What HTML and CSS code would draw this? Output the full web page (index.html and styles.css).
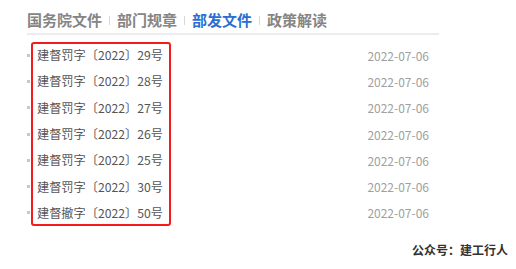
FILE: index.html
```html
<!DOCTYPE html>
<html lang="zh-CN">
<head>
    <meta charset="UTF-8">
    <meta name="viewport" content="width=device-width, initial-scale=1.0">
    <title>部发文件</title>
    <link rel="stylesheet" href="styles.css">
</head>
<body>

<div class="panel">
    <div class="tabs">
        <span class="tab">国务院文件</span>
        <span class="sep"></span>
        <span class="tab">部门规章</span>
        <span class="sep"></span>
        <span class="tab active">部发文件</span>
        <span class="sep"></span>
        <span class="tab">政策解读</span>
    </div>

    <div class="list-wrap">
        <ul class="doc-list">
            <li><span class="title">建督罚字〔2022〕29号</span><span class="date">2022-07-06</span></li>
            <li><span class="title">建督罚字〔2022〕28号</span><span class="date">2022-07-06</span></li>
            <li><span class="title">建督罚字〔2022〕27号</span><span class="date">2022-07-06</span></li>
            <li><span class="title">建督罚字〔2022〕26号</span><span class="date">2022-07-06</span></li>
            <li><span class="title">建督罚字〔2022〕25号</span><span class="date">2022-07-06</span></li>
            <li><span class="title">建督罚字〔2022〕30号</span><span class="date">2022-07-06</span></li>
            <li><span class="title">建督撤字〔2022〕50号</span><span class="date">2022-07-06</span></li>
        </ul>
        <!-- highlight box drawn over the titles -->
        <div class="mark"></div>
    </div>
</div>

<div class="footer">公众号：建工行人</div>

</body>
</html>
```

FILE: styles.css
```css
body {
    font-family: "Noto Sans CJK SC", "Noto Sans", sans-serif;
    background-color: #fff;
    margin: 0;
    padding: 0;
    width: 516px;
    height: 269px;
    overflow: hidden;
}
.panel {
    width: 412px;
    margin-left: 27px;
    padding-top: 7px;
}
.tabs {
    display: flex;
    align-items: center;
    height: 26px;
    border-bottom: 2px solid #ebebf0;
}
.tab {
    font-size: 15px;
    font-weight: bold;
    color: #858585;
    line-height: 20px;
}
.tab.active {
    color: #2a6ed2;
}
.sep {
    width: 1px;
    height: 9px;
    background-color: #d8d8d8;
    margin: 0 7px;
}
.list-wrap {
    position: relative;
    padding-top: 7px;
}
.doc-list {
    list-style: none;
    margin: 0;
    padding: 0;
}
.doc-list li {
    display: flex;
    align-items: center;
    justify-content: space-between;
    height: 26.3px;
    padding-right: 10px;
}
.doc-list li::before {
    content: "";
    width: 3px;
    height: 3px;
    background-color: #c8c8c8;
    margin-right: 7px;
}
.title {
    flex: 1;
    font-size: 12.2px;
    color: #555;
}
.date {
    font-size: 12px;
    color: #a0a0a0;
}
.mark {
    position: absolute;
    left: 4px;
    top: 7px;
    width: 136px;
    height: 180px;
    border: 2px solid #f21c1c;
    border-radius: 3px;
}
.footer {
    position: absolute;
    right: 8px;
    top: 241px;
    font-size: 12px;
    font-weight: bold;
    color: #333;
}
```
